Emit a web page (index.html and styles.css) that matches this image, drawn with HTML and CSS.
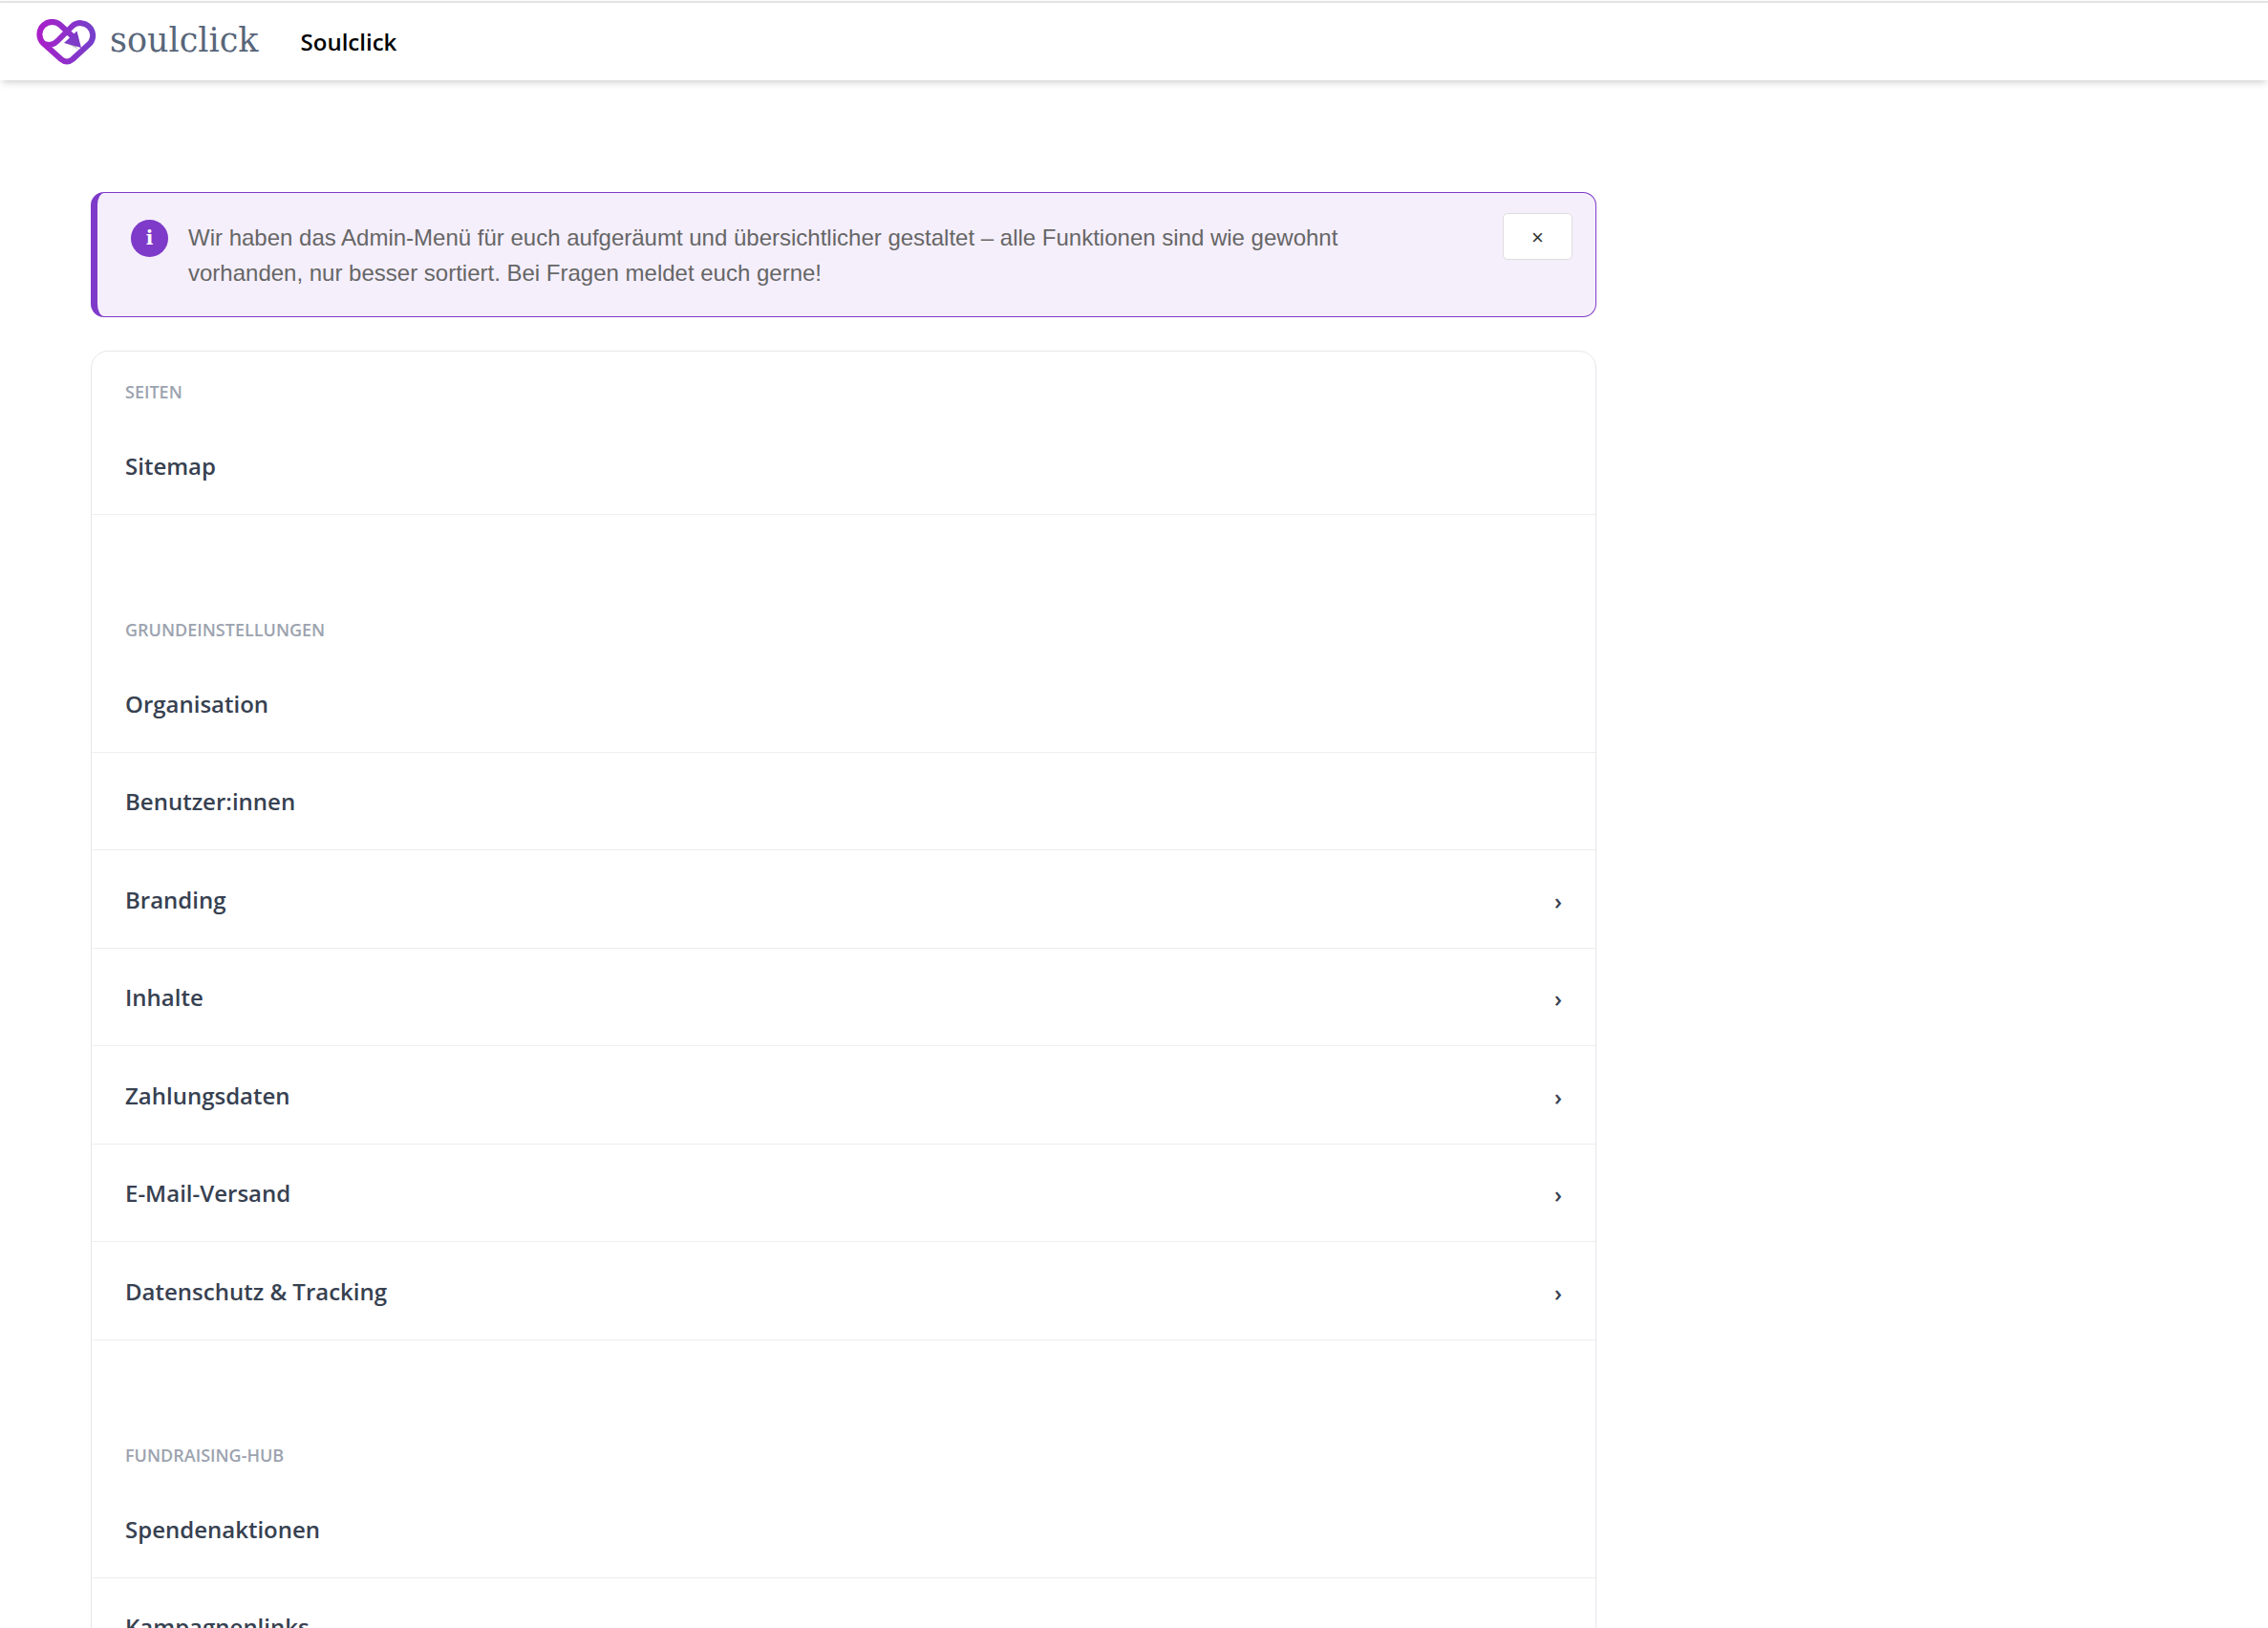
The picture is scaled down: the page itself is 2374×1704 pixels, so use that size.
FILE: index.html
```
<!DOCTYPE html>
<html lang="de">
<head>
    <meta charset="UTF-8">
    <meta name="viewport" content="width=device-width, initial-scale=1.0">
    <title>Soulclick</title>
    <link rel="stylesheet" href="styles.css">
</head>
<body>
    <header class="topbar">
        <a href="#" class="logo">
            <svg class="logo-icon" viewBox="0 0 64 48" aria-hidden="true">
                <defs>
                    <linearGradient id="heart" x1="0" y1="0" x2="1" y2="0">
                        <stop offset="0" stop-color="#a81fc9"/>
                        <stop offset="1" stop-color="#763fca"/>
                    </linearGradient>
                </defs>
                <path d="M30 24 L36 21 L44 32 Z" fill="#c4c4c4"/>
                <path d="M40 20 L26 7 A13 13 0 1 0 7 25 L26 42 Q32 47 38 42 L56.500 25 A13 13 0 0 0 38 7 L22 23 A12 12 0 0 1 9 26" fill="none" stroke="url(#heart)" stroke-width="6" stroke-linejoin="round"/>
                <path d="M42.500 12.500 L47 30 L29 25 Z" fill="#7d3bc8"/>
            </svg>
            <span class="logo-text">soulclick</span>
        </a>
        <a href="#" class="topbar-title">Soulclick</a>
    </header>

    <main class="container">
        <div class="notice" id="notice">
            <span class="notice-icon">i</span>
            <p class="notice-text">Wir haben das Admin-Menü für euch aufgeräumt und übersichtlicher gestaltet – alle Funktionen sind wie gewohnt vorhanden, nur besser sortiert. Bei Fragen meldet euch gerne!</p>
            <button type="button" class="notice-close" aria-label="Schließen" onclick="document.getElementById('notice').remove()">×</button>
        </div>

        <nav class="menu">
            <section class="menu-section">
                <h2>Seiten</h2>
                <a href="#" class="menu-item">Sitemap</a>
            </section>

            <section class="menu-section">
                <h2>Grundeinstellungen</h2>
                <a href="#" class="menu-item">Organisation</a>
                <a href="#" class="menu-item">Benutzer:innen</a>
                <button type="button" class="menu-item expandable">Branding <span class="arrow">›</span></button>
                <button type="button" class="menu-item">Inhalte <span class="arrow">›</span></button>
                <button type="button" class="menu-item expandable">Zahlungsdaten <span class="arrow">›</span></button>
                <button type="button" class="menu-item">E-Mail-Versand <span class="arrow">›</span></button>
                <button type="button" class="menu-item expandable">Datenschutz &amp; Tracking <span class="arrow">›</span></button>
            </section>

            <section class="menu-section">
                <h2>Fundraising-Hub</h2>
                <a href="#" class="menu-item">Spendenaktionen</a>
                <a href="#" class="menu-item">Kampagnenlinks</a>
            </section>
        </nav>
    </main>
</body>
</html>
```

FILE: styles.css
```
* {
    box-sizing: border-box;
}

html {
    height: 100%;
}

/* the menu scrolls inside the page */
body {
    margin: 0;
    padding-top: 1px;
    height: 100%;
    display: flex;
    flex-direction: column;
    overflow: hidden;
    background: #fff;
    font-family: "Segoe UI", "Open Sans", "Noto Sans", sans-serif;
    color: #374151;
}

a {
    color: inherit;
    text-decoration: none;
}

/* Top bar */
.topbar {
    flex: none;
    display: flex;
    align-items: center;
    gap: 44px;
    height: 83px;
    padding: 0 38px;
    border-top: 2px solid #e2e4e3;
    box-shadow: 0 4px 8px -2px rgba(0, 0, 0, 0.2);
}

.logo {
    display: flex;
    align-items: center;
    gap: 13px;
}

.logo-icon {
    width: 64px;
    height: 48px;
}

.logo-text {
    padding-bottom: 4px;
    font-family: "Museo Slab", "DejaVu Serif", serif;
    font-size: 35px;
    line-height: 40px;
    color: #58667a;
}

.topbar-title {
    font-size: 24px;
    font-weight: 600;
    color: #000;
}

.container {
    flex: 1;
    min-height: 0;
    overflow-x: hidden;
    overflow-y: auto;
    scrollbar-width: none;
    margin-top: 12px;
    padding: 105px 95px 0;
}

/* Notice */
.notice {
    display: flex;
    align-items: flex-start;
    max-width: 1576px;
    margin-bottom: 35px;
    padding: 21px 24px 27px 35px;
    background: #f5effc;
    border: 1px solid #7e3ac8;
    border-left-width: 7px;
    border-radius: 14px;
}

.notice-icon {
    flex: none;
    width: 39px;
    height: 39px;
    margin-top: 7px;
    border-radius: 50%;
    background: #7e3ac8;
    color: #fff;
    font-family: Georgia, "DejaVu Serif", serif;
    font-size: 20px;
    font-weight: 700;
    line-height: 39px;
    text-align: center;
}

.notice-text {
    flex: 1;
    margin: 7px 100px 0 21px;
    font-family: Arial, "Liberation Sans", sans-serif;
    font-size: 24px;
    line-height: 37px;
    color: #666;
}

.notice-close {
    flex: none;
    width: 73px;
    height: 49px;
    padding: 2px 0 0;
    border: 1px solid #ddd;
    border-radius: 5px;
    background: #fff;
    color: #333;
    font-family: Arial, "Liberation Sans", sans-serif;
    font-size: 22px;
    cursor: pointer;
}

/* Menu */
.menu {
    max-width: 1576px;
    border: 1px solid #e5e7eb;
    border-radius: 18px;
}

.menu-section + .menu-section {
    padding-top: 78px;
}

.menu-section h2 {
    margin: 0;
    padding: 32px 35px 16px;
    font-size: 18px;
    font-weight: 600;
    line-height: 21px;
    text-transform: uppercase;
    color: #9ca3af;
}

.menu-item {
    display: flex;
    align-items: center;
    justify-content: space-between;
    width: 100%;
    height: 102px;
    padding: 0 35px;
    border: none;
    border-bottom: 1px solid #eee;
    background: none;
    color: #374151;
    font-family: inherit;
    font-size: 24px;
    font-weight: 600;
    text-align: left;
    cursor: pointer;
}

.menu-item.expandable {
    height: 103px;
}

.menu-item:hover {
    background: #f9fafb;
}

.arrow {
    padding-top: 2px;
}
```
